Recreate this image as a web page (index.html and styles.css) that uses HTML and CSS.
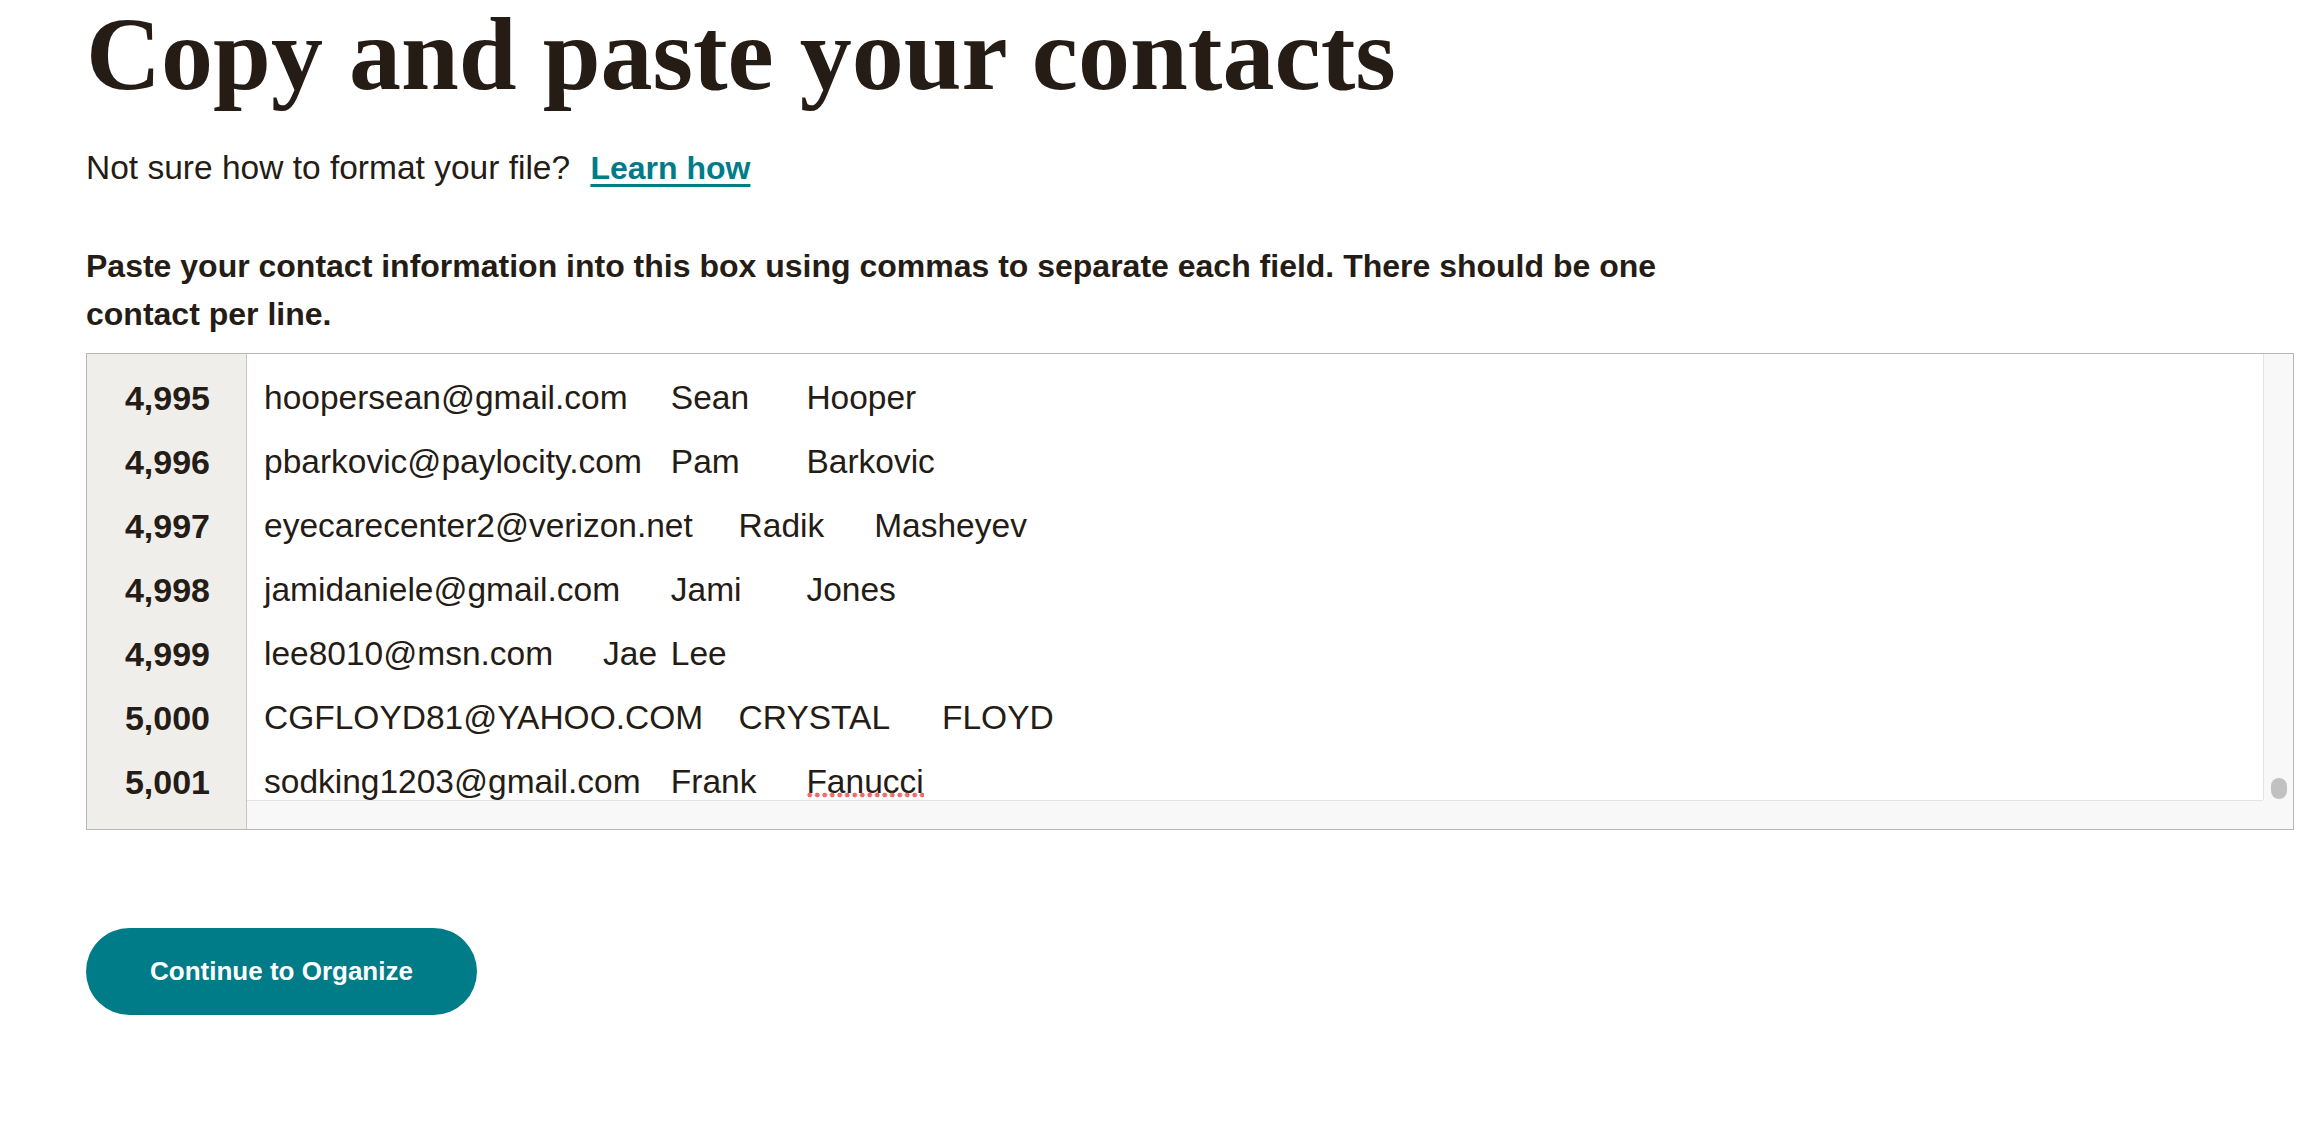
FILE: index.html
```html
<!DOCTYPE html>
<html lang="en">
<head>
<meta charset="utf-8">
<title>Copy and paste your contacts</title>
<link rel="stylesheet" href="styles.css">
</head>
<body>
<main class="page">
  <h1 class="title">Copy and paste your contacts</h1>
  <p class="hint">Not sure how to format your file? <a class="learn" href="#">Learn how</a></p>
  <p class="lead">Paste your contact information into this box using commas to separate each field. There should be one contact per line.</p>

  <div class="box">
    <div class="gutter">
      <div class="num">4,995</div>
      <div class="num">4,996</div>
      <div class="num">4,997</div>
      <div class="num">4,998</div>
      <div class="num">4,999</div>
      <div class="num">5,000</div>
      <div class="num">5,001</div>
    </div>
    <div class="editor">
      <div class="content">
        <div class="line">hoopersean@gmail.com	Sean	Hooper</div>
        <div class="line">pbarkovic@paylocity.com	Pam	Barkovic</div>
        <div class="line">eyecarecenter2@verizon.net	Radik	Masheyev</div>
        <div class="line">jamidaniele@gmail.com	Jami	Jones</div>
        <div class="line">lee8010@msn.com	Jae	Lee</div>
        <div class="line">CGFLOYD81@YAHOO.COM	CRYSTAL	FLOYD</div>
        <div class="line">sodking1203@gmail.com	Frank	<span class="typo">Fanucci</span></div>
      </div>
      <div class="vtrack"><div class="thumb"></div></div>
      <div class="htrack"></div>
      <div class="corner"></div>
    </div>
  </div>

  <button class="continue" type="button">Continue to Organize</button>
</main>
</body>
</html>
```

FILE: styles.css
```css
html, body {
  margin: 0;
  padding: 0;
  background: #ffffff;
}

body {
  font-family: "Liberation Sans", Arial, sans-serif;
  color: #241c15;
}

.page {
  padding: 2px 0 0 86px;
}

.title {
  margin: 0;
  font-family: "Liberation Serif", "Times New Roman", serif;
  font-weight: 700;
  font-size: 104px;
  line-height: 104px;
  color: #241c15;
}

.hint {
  margin: 38px 0 0 0;
  font-size: 33.5px;
  line-height: 48px;
}

.learn {
  margin-left: 11px;
  font-size: 32px;
  font-weight: 700;
  color: #007c89;
  text-decoration: underline;
  text-decoration-thickness: 3px;
  text-underline-offset: 5px;
}

.lead {
  margin: 50px 0 0 0;
  width: 1620px;
  font-size: 32px;
  font-weight: 700;
  line-height: 48px;
}

.box {
  margin-top: 15px;
  width: 2206px;
  height: 475px;
  border: 1px solid #b7b7b7;
  display: flex;
}

.gutter {
  width: 123px;
  flex: none;
  background: #efeeeb;
  border-right: 1px solid #c6c5c1;
  padding: 12px 36px 0 0;
  text-align: right;
  font-size: 34px;
  font-weight: 700;
  line-height: 64px;
}

.editor {
  flex: 1;
  display: grid;
  grid-template-columns: 1fr 30px;
  grid-template-rows: 1fr 29px;
  background: #f8f8f8;
  min-width: 0;
}

.content {
  background: #ffffff;
  overflow: hidden;
  padding: 12px 0 0 17px;
  font-size: 33.5px;
  line-height: 64px;
}

.line {
  height: 64px;
  white-space: pre;
  tab-size: 67.8px;
  -moz-tab-size: 67.8px;
}

.typo {
  position: relative;
}

.typo::after {
  content: "";
  position: absolute;
  left: 0;
  right: 0;
  top: 29px;
  height: 6px;
  background-image: radial-gradient(circle, #f26a6a 2.1px, rgba(242, 106, 106, 0) 2.7px);
  background-size: 7.5px 6px;
  background-repeat: repeat-x;
}

.vtrack {
  border-left: 1px solid #e4e4e4;
  display: flex;
  flex-direction: column;
  justify-content: flex-end;
  align-items: center;
  padding-bottom: 1px;
}

.thumb {
  width: 16px;
  height: 21px;
  border-radius: 8px;
  background: #c1c1c1;
}

.htrack {
  border-top: 1px solid #e4e4e4;
}

.continue {
  display: flex;
  align-items: center;
  justify-content: center;
  margin-top: 98px;
  width: 391px;
  height: 87px;
  padding: 0;
  border: none;
  border-radius: 44px;
  background: #007c89;
  color: #ffffff;
  font-family: "Liberation Sans", Arial, sans-serif;
  font-size: 26px;
  font-weight: 700;
  cursor: pointer;
}
```
